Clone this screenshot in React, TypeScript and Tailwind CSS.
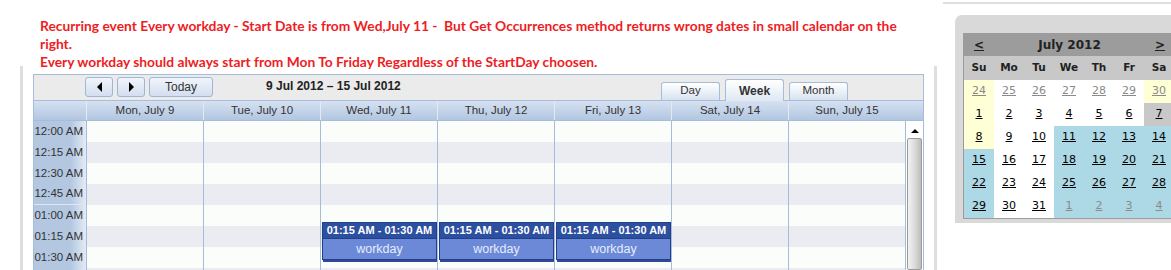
import React from "react";

const DAYS = ["Mon, July 9", "Tue, July 10", "Wed, July 11", "Thu, July 12", "Fri, July 13", "Sat, July 14", "Sun, July 15"];
const TIMES = ["12:00 AM", "12:15 AM", "12:30 AM", "12:45 AM", "01:00 AM", "01:15 AM", "01:30 AM", "01:45 AM"];
// columns that carry the recurring "workday" event (Wed, Thu, Fri)
const EVENT_COLS = [2, 3, 4];

type Cell = { d: number; other?: boolean; bg: "y" | "w" | "b" | "g" };

const MONTH: Cell[][] = [
  [{ d: 24, other: true, bg: "y" }, { d: 25, other: true, bg: "w" }, { d: 26, other: true, bg: "w" }, { d: 27, other: true, bg: "w" }, { d: 28, other: true, bg: "w" }, { d: 29, other: true, bg: "w" }, { d: 30, other: true, bg: "y" }],
  [{ d: 1, bg: "y" }, { d: 2, bg: "w" }, { d: 3, bg: "w" }, { d: 4, bg: "w" }, { d: 5, bg: "w" }, { d: 6, bg: "w" }, { d: 7, bg: "g" }],
  [{ d: 8, bg: "y" }, { d: 9, bg: "w" }, { d: 10, bg: "w" }, { d: 11, bg: "b" }, { d: 12, bg: "b" }, { d: 13, bg: "b" }, { d: 14, bg: "b" }],
  [{ d: 15, bg: "b" }, { d: 16, bg: "w" }, { d: 17, bg: "w" }, { d: 18, bg: "b" }, { d: 19, bg: "b" }, { d: 20, bg: "b" }, { d: 21, bg: "b" }],
  [{ d: 22, bg: "b" }, { d: 23, bg: "w" }, { d: 24, bg: "w" }, { d: 25, bg: "b" }, { d: 26, bg: "b" }, { d: 27, bg: "b" }, { d: 28, bg: "b" }],
  [{ d: 29, bg: "b" }, { d: 30, bg: "w" }, { d: 31, bg: "w" }, { d: 1, other: true, bg: "b" }, { d: 2, other: true, bg: "b" }, { d: 3, other: true, bg: "b" }, { d: 4, other: true, bg: "b" }],
];

const CELL_BG = { y: "bg-[#ffffd6]", w: "bg-white", b: "bg-[#add8e6]", g: "bg-[#c8c8c8]" };

function NavButton({ dir }: { dir: "l" | "r" }) {
  return (
    <button className="grid h-[20px] w-[28px] place-items-center rounded-[3px] border border-[#9fb6d6] bg-gradient-to-b from-[#f1f5fb] to-[#d3def0]">
      {dir === "l" ? (
        <span className="h-0 w-0 border-y-[5px] border-r-[5px] border-y-transparent border-r-black" />
      ) : (
        <span className="h-0 w-0 border-y-[5px] border-l-[5px] border-y-transparent border-l-black" />
      )}
    </button>
  );
}

function Tab({ label, active }: { label: string; active?: boolean }) {
  return (
    <div
      className={
        active
          ? "mb-[-1px] flex h-[22px] w-[59px] items-center justify-center rounded-t-[3px] border border-b-0 border-[#a6bcd8] bg-gradient-to-b from-white to-[#dfe8f4] text-[12px] font-bold text-[#333]"
          : "flex h-[18px] w-[59px] items-end justify-center rounded-t-[3px] border border-b-0 border-[#a6bcd8] bg-gradient-to-b from-white to-[#d8e2f0] pb-[1px] text-[11.5px] text-[#333]"
      }
    >
      {label}
    </div>
  );
}

function WeekCalendar() {
  return (
    <div className="w-[891px] border-x border-t border-[#a6bcd8] font-['Liberation_Sans',Arial,sans-serif] text-[11.5px] text-[#333]">
      {/* toolbar */}
      <div className="flex h-[25px] items-end bg-[#ebebeb]">
        <div className="mb-[3px] ml-[51px] flex gap-[4px]">
          <NavButton dir="l" />
          <NavButton dir="r" />
          <button className="h-[20px] w-[64px] rounded-[3px] border border-[#9fb6d6] bg-gradient-to-b from-[#f1f5fb] to-[#d3def0] text-[12px] text-[#333]">
            Today
          </button>
        </div>
        <div className="mb-[5px] ml-[53px] text-[12px] font-bold text-[#222]">9 Jul 2012 – 15 Jul 2012</div>
        <div className="ml-auto mr-[75px] flex items-end gap-[5px]">
          <Tab label="Day" />
          <Tab label="Week" active />
          <Tab label="Month" />
        </div>
      </div>
      {/* day headers */}
      <div className="flex h-[20px] border-t border-[#a6bcd8] bg-gradient-to-b from-[#d6e1f1] to-[#b2c6e1]">
        <div className="w-[52px]" />
        {DAYS.map((d) => (
          <div key={d} className="flex w-[117px] items-center justify-center border-l border-[#e3eaf4] pt-[1px]">
            {d}
          </div>
        ))}
      </div>
      {/* body */}
      <div className="flex h-[150px] overflow-hidden border-t border-[#a6bcd8]">
        <div className="w-[52px] shrink-0 bg-gradient-to-r from-[#b3c7e1] from-70% to-[#e4ebf5]">
          {TIMES.map((t, i) => (
            <div
              key={t}
              className={
                "flex h-[21px] items-center justify-end pr-[3px] " + (i === 3 ? "border-b border-[#dfe7f2]" : "")
              }
            >
              {t}
            </div>
          ))}
        </div>
        {DAYS.map((d, c) => (
          <div key={d} className="relative w-[117px] shrink-0 border-l border-[#a6bcd8]">
            {TIMES.map((t, i) => (
              <div key={t} className={"h-[21px] " + (i % 2 === 0 ? "bg-[#fbfdfb]" : "bg-[#ebecf2]")} />
            ))}
            {EVENT_COLS.includes(c) && (
              <div className="absolute left-[1px] top-[101px] w-[115px] shadow-[1px_2px_0_#31499a]">
                <div className="border border-[#22408a] bg-[#2c4f9f] py-[1px] text-center text-[11px] font-bold leading-[13px] text-white">
                  01:15 AM - 01:30 AM
                </div>
                <div className="h-[21px] border-x border-b border-[#22408a] bg-[#6b89d6] text-center text-[12.5px] leading-[20px] text-[#e6ecff]">
                  workday
                </div>
              </div>
            )}
          </div>
        ))}
        {/* scrollbar */}
        <div className="flex w-[18px] shrink-0 flex-col items-center border-l border-[#a6bcd8] bg-white">
          <span className="mt-[8px] h-0 w-0 border-x-[4px] border-b-[4px] border-x-transparent border-b-black" />
          <div className="mt-[5px] h-[200px] w-[15px] rounded-[2px] border border-[#9a9a9a] bg-gradient-to-r from-[#f2f2f2] via-[#dcdcdc] to-[#bdbdbd]" />
        </div>
      </div>
    </div>
  );
}

function MiniCalendar() {
  return (
    <div className="ml-[12px] mt-[11px] h-[208px] w-[230px] rounded-tl-[7px] bg-[#d9d9d9] pl-[8px] pt-[18px] font-['DejaVu_Sans',Verdana,sans-serif]">
      <div className="w-[212px] border-b border-l border-[#9c9c9c]">
        <div className="flex h-[23px] items-center bg-[#9c9c9c] text-[12px] font-bold text-[#222]">
          <span className="w-[30px] text-center underline">&lt;</span>
          <span className="flex-1 text-center">July 2012</span>
          <span className="w-[30px] text-center underline">&gt;</span>
        </div>
        <div className="flex h-[24px] items-center bg-[#c8c8c8] text-[10.5px] font-bold text-[#222]">
          {["Su", "Mo", "Tu", "We", "Th", "Fr", "Sa"].map((d) => (
            <span key={d} className="w-[30px] text-center">
              {d}
            </span>
          ))}
        </div>
        {MONTH.map((row, r) => (
          <div key={r} className="flex h-[23px]">
            {row.map((c, i) => (
              <div
                key={i}
                className={
                  "flex w-[30px] items-center justify-center text-[11px] underline " +
                  CELL_BG[c.bg] +
                  (c.other ? " text-[#8a8a8a]" : " text-black")
                }
              >
                {c.d}
              </div>
            ))}
          </div>
        ))}
      </div>
    </div>
  );
}

export default function App() {
  return (
    <div className="flex h-[270px] w-[1171px] overflow-hidden bg-white">
      <div className="w-[943px] shrink-0">
        <div className="pl-[40px] pt-[17px] font-['Lato',sans-serif] text-[13.8px] font-bold leading-[18px] text-[#ee1d24]">
          <p className="whitespace-nowrap">
            Recurring event Every workday - Start Date is from Wed,July 11 -&nbsp; But Get Occurrences method returns wrong dates in small calendar on the
          </p>
          <p>right.</p>
          <p className="whitespace-nowrap">Every workday should always start from Mon To Friday Regardless of the StartDay choosen.</p>
        </div>
        <div className="ml-[20px] mt-[-5px] h-[300px] w-[917px] border-x-[3px] border-x-[#dedede] pl-[10px] pt-[8px]">
          <WeekCalendar />
        </div>
      </div>
      <div className="flex-1 pt-[2px]">
        <div className="border-t-2 border-[#dedede]" />
        <MiniCalendar />
      </div>
    </div>
  );
}
